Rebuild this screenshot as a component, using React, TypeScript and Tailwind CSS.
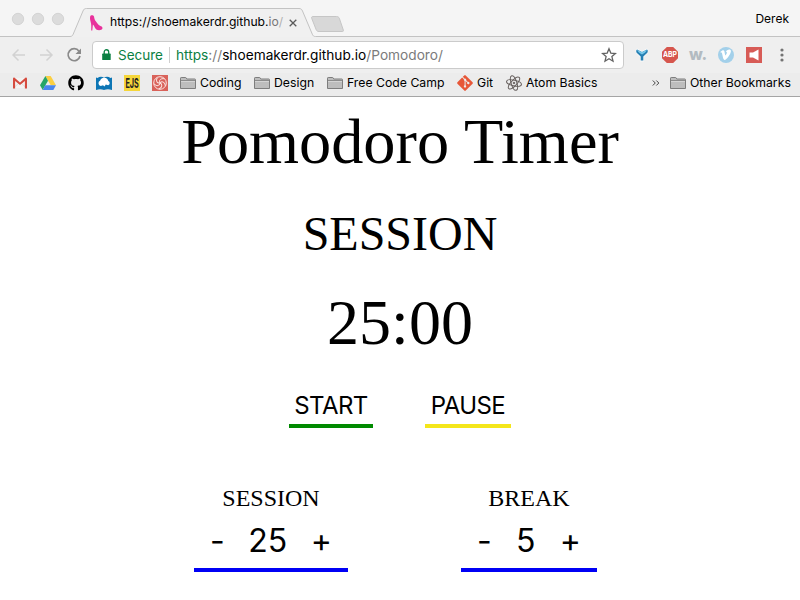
import React from "react";
import { FaGithub, FaGitAlt } from "react-icons/fa";

const ui = "font-['Inter','Liberation_Sans',sans-serif]";
const serif = "font-['Liberation_Serif',serif]";

function Folder() {
  return (
    <svg className="h-4 w-4 shrink-0" viewBox="0 0 16 16">
      <path d="M.5 13.5V3.2c0-.5.3-.7.7-.7h4.3c.5 0 .6.2.8.6l.4.9h8.1c.5 0 .7.3.7.7v8.8z" fill="#bdbdbd" stroke="#7d7d7d" />
      <path d="M1 5.5h14" stroke="#8c8c8c" />
      <path d="M1 6.5h14" stroke="#d4d4d4" />
    </svg>
  );
}

function Gmail() {
  return (
    <svg className="h-4 w-4" viewBox="0 0 16 16">
      <path d="M2 3h12v10H2z" fill="#f4f2f1" />
      <path d="M2 12.5 7 8M14 12.5 9 8" stroke="#d8d4d3" strokeWidth=".8" />
      <path d="M1 13.5V3.800C1 3 1.600 2.600 2.300 2.600L8 7.400l5.700-4.800c.7 0 1.300.4 1.300 1.200v9.700h-2.100V5.900L8 10 3.100 5.900v7.600z" fill="#d54b3f" />
    </svg>
  );
}

function Drive() {
  return (
    <svg className="h-4 w-4" viewBox="0 0 16 16">
      <path d="M5.4 1.1h5.3L16 10.2h-5.3z" fill="#fbcf42" />
      <path d="M5.4 1.1 8 5.7 2.7 14.9 0 10.2z" fill="#26a567" />
      <path d="M5.3 10.2H16l-2.700 4.700H2.700z" fill="#4986ee" />
    </svg>
  );
}

function CloudBook() {
  return (
    <svg className="h-4 w-4" viewBox="0 0 16 16">
      <path d="M0 2.500l1.500.5c2-1.600 4.700-1.600 6.500-.3 1.800-1.300 4.500-1.300 6.500.3l1.500-.5V15c-2.800-1-5.500-1-8 0-2.500-1-5.200-1-8 0z" fill="#0d76b5" />
      <path d="M4.800 11a2.900 2.900 0 0 1-.6-5.500A4.200 4.200 0 0 1 12.300 6a2.300 2.300 0 0 1-.2 4.300L9.800 9.600 8.500 11.500 7 10.300z" fill="#fff" />
    </svg>
  );
}

function Ejs() {
  return (
    <span className="flex h-4 w-4 items-center justify-center bg-[#f5d63a]">
      <span className={`${ui} scale-x-[.66] scale-y-[1.2] text-[11px] font-bold leading-4 text-[#222]`}>EJS</span>
    </span>
  );
}

function Swirl() {
  return (
    <svg className="h-4 w-4" viewBox="0 0 16 16">
      <path d="M0 0h16v16H0z" fill="#d9625a" />
      <g fill="none" stroke="#fbe5e2" strokeWidth="1">
        <circle cx="8" cy="8" r="6.3" />
        {[0, 72, 144, 216, 288].map((a) => (
          <path key={a} d="M8 8C6.500 5.500 8.500 3 12.500 3.800" transform={`rotate(${a} 8 8)`} />
        ))}
      </g>
    </svg>
  );
}

function Atom() {
  return (
    <svg className="h-4 w-4" viewBox="0 0 16 16" fill="none" stroke="#67605e" strokeWidth="1">
      <ellipse cx="8" cy="8" rx="7.6" ry="2.8" transform="rotate(13 8 8)" />
      <ellipse cx="8" cy="8" rx="7.6" ry="2.8" transform="rotate(73 8 8)" />
      <ellipse cx="8" cy="8" rx="7.6" ry="2.8" transform="rotate(133 8 8)" />
      <circle cx="8" cy="8" r=".8" fill="#67605e" />
    </svg>
  );
}

function TabStrip() {
  return (
    <div className="relative h-[37px] bg-[#f5f5f5]">
      <svg className="absolute inset-0" width="800" height="37" viewBox="0 0 800 37">
        <g fill="#dcdcdc" stroke="#cecece" strokeWidth=".8">
          <circle cx="18" cy="19" r="5.700" />
          <circle cx="38" cy="19" r="5.700" />
          <circle cx="58" cy="19" r="5.700" />
        </g>
        <path d="M0 36.500H70c2 0 2.500-.8 3.200-2.300L83 11c.8-1.800 1.500-2.500 3.500-2.500H299c2 0 2.700.8 3.500 2.500l9.800 23.200c.7 1.500 1.200 2.300 3.200 2.300H800V38H0z" fill="#f0f0f0" />
        <path d="M0 36.500H70c2 0 2.500-.8 3.200-2.300L83 11c.8-1.800 1.500-2.500 3.500-2.500H299c2 0 2.700.8 3.500 2.500l9.800 23.200c.7 1.500 1.200 2.300 3.200 2.300H800" fill="none" stroke="#c3c3c3" />
        <path d="M313 16.500h23.500c1.500 0 2.200.5 2.800 1.700l4 11.800c.4 1 0 1.500-1 1.500H319c-1.500 0-2.200-.5-2.800-1.700l-4.500-11.500c-.4-1.200.2-1.800 1.300-1.800z" fill="#d8d8d8" stroke="#c6c6c6" />
      </svg>
      <div className="relative flex h-[37px] items-start pl-[89px]">
        <svg className="mt-[15px] h-4 w-4" viewBox="0 0 16 16">
          <path d="M1.700.5C3-.1 4.600.3 5 1.500c.3 1.800.6 3.500 2.200 5.300 1.300 1.600 2 3.200 3.800 4 1.300.5 2.600 1 2.500 2.500-.1 1.800-3.800 2.400-5.800 1.400C6 13.700 5.600 11 3.900 9.400L3.300 15.500H2.200C2.200 12 2.600 9 1.500 6.200 1 4.500.6 1.500 1.700.5z" fill="#e8319b" />
        </svg>
        <div className={`${ui} mt-[14px] ml-[5px] h-4 w-[178px] whitespace-nowrap text-[12.150px] leading-4`}>
          https://shoemakerdr.github.<span className="text-[#777]">io</span><span className="text-[#b0b0b0]">/</span>
        </div>
        <svg className="mt-[19px] ml-[1px] h-2 w-2" viewBox="0 0 8 8"><path d="m.7.7 6.600 6.600m0-6.600L.7 7.300" stroke="#5a5a5a" strokeWidth="1.300" /></svg>
        <span className={`${ui} mt-[11px] mr-[11px] ml-auto text-[12px] leading-4 text-black`}>Derek</span>
      </div>
    </div>
  );
}

function Toolbar() {
  return (
    <div className="flex h-[36px] items-center bg-[#efefef] pl-[12px]">
      <svg className="h-4 w-[72px]" viewBox="0 0 72 16" fill="none">
        <path d="M13 8H1m5.500-5.500L1 8l5.500 5.500M28 8h12m-5.500-5.500L40 8l-5.500 5.500" stroke="#d2d2d2" strokeWidth="1.500" />
        <path d="M67 4.200A6 6 0 1 0 68 9" stroke="#8a8a8a" strokeWidth="1.700" />
        <path d="M69 1.500V7h-5.500z" fill="#8a8a8a" />
      </svg>
      <div className="ml-[8px] flex h-[28px] w-[532px] items-center rounded-[4px] border border-[#cbcbcb] bg-white pl-[9px]">
        <svg className="h-3 w-[9px]" viewBox="0 0 9 12"><path d="M2.200 5.500V3a2.200 2.200 0 0 1 4.500 0v2.500" fill="none" stroke="#0b8043" strokeWidth="1.300" /><rect x=".2" y="4.600" width="8.500" height="6.500" rx=".6" fill="#0b8043" /></svg>
        <span className={`${ui} mt-px ml-[7px] w-[51px] whitespace-nowrap text-[13.500px] text-[#0b8043]`}>Secure</span>
        <span className="h-[16px] w-px bg-[#cfcfcf]" />
        <span className={`${ui} mt-px ml-[6px] whitespace-nowrap text-[13.700px] text-[#7b7b7b]`}>
          <span className="text-[#0b8043]">https</span>://<span className="text-black">shoemakerdr.github.io</span>/Pomodoro/
        </span>
        <svg className="mr-[6px] ml-auto h-4 w-4" viewBox="0 0 16 16"><path d="m8 1.800 1.800 4.300 4.700.4-3.600 3.100 1.100 4.600L8 11.700l-4 2.500 1.100-4.600-3.600-3.100 4.700-.4z" fill="none" stroke="#626262" strokeWidth="1.300" /></svg>
      </div>
      <div className="ml-[10px] flex gap-[12px]">
        <svg className="h-4 w-4" viewBox="0 0 16 16">
          <path d="M3 1.500 8 4l5-2.500c2 1.200 1.800 3.500.3 5L10 10v4.500H6V10L2.700 6.500C1.200 5 1 2.700 3 1.500z" fill="#fafafa" />
          <path d="M3 2.500 8 5l5-2.500c1.200 1 1 2.700-.2 3.800L9.300 9.500v4H6.700v-4L3.200 6.300C2 5.200 1.800 3.500 3 2.500z" fill="#267fb3" />
          <path d="M3.200 2.700 8 5.200l4.800-2.500c-.5 2-2.600 3.600-4.800 4.800C5.800 6.300 3.700 4.700 3.200 2.700z" fill="#79c8ea" />
        </svg>
        <span className="flex h-4 w-4 items-center justify-center bg-[#d6564d] [clip-path:polygon(30%_0,70%_0,100%_30%,100%_70%,70%_100%,30%_100%,0_70%,0_30%)]"><span className={`${ui} scale-y-[1.150] text-[6.800px] leading-4 font-bold text-white`}>ABP</span></span>
        <span className={`${ui} -mt-px flex h-4 w-4 items-center justify-center text-[16px] font-extrabold text-[#b3bbc1]`}>w.</span>
        <svg className="h-4 w-4" viewBox="0 0 16 16"><circle cx="8" cy="8" r="8" fill="#a3d0ea" /><path d="M2.500 4.800C4.200 3.200 5.800 2.500 6.400 4.200L7.200 8.500c1.500-1.500 2-2.800 1.500-3.500-.4-.4-1 0-1 0 .8-2.700 5.500-3.700 5.200-.8-.2 3-4.500 8.800-6.200 8.800-1.800 0-2.200-5.500-2.800-7-.3-.6-.7-.4-1 0z" fill="#fff" /></svg>
        <svg className="h-4 w-4" viewBox="0 0 16 16"><path d="M0 0h16v16H0z" fill="#d75b56" /><path d="M3.500 5.500H7L12.500 2.500v11L7 10.500H3.500z" fill="#fff" /></svg>
        <svg className="h-4 w-4" viewBox="0 0 16 16" fill="#737373"><circle cx="8" cy="3" r="1.600" /><circle cx="8" cy="8" r="1.600" /><circle cx="8" cy="13" r="1.600" /></svg>
      </div>
    </div>
  );
}

function Label({ children, className }: { children: React.ReactNode; className: string }) {
  return <span className={`${ui} mt-px ml-[4px] whitespace-nowrap text-[12.250px] leading-4 text-black ${className}`}>{children}</span>;
}

function Bookmarks() {
  return (
    <div className="flex h-[24px] items-center border-b border-[#a5a5a5] bg-[#ececec] pb-[4px] pl-[12px]">
      <div className="flex items-center gap-[12px]">
        <Gmail />
        <Drive />
        <FaGithub className="h-4 w-4" />
        <CloudBook />
        <Ejs />
        <Swirl />
        <div className="flex items-center"><Folder /><Label className="w-[42px]">Coding</Label></div>
        <div className="flex items-center"><Folder /><Label className="w-[41px]">Design</Label></div>
        <div className="flex items-center"><Folder /><Label className="w-[98px]">Free Code Camp</Label></div>
        <div className="flex items-center"><FaGitAlt className="-mx-px h-[18px] w-[18px] text-[#e75738]" /><Label className="w-[17px]">Git</Label></div>
        <div className="flex items-center"><Atom /><Label className="w-[72px]">Atom Basics</Label></div>
      </div>
      <svg className="ml-[54px] h-2 w-2" viewBox="0 0 8 8" fill="none" stroke="#444"><path d="M.8 1.500 3.300 4 .8 6.500M4.300 1.500 6.800 4 4.300 6.500" /></svg>
      <div className="ml-[10px] flex items-center"><Folder /><Label className="w-[102px]">Other Bookmarks</Label></div>
    </div>
  );
}

function Stepper({ title, value, width }: { title: string; value: number; width: string }) {
  return (
    <div className={`flex flex-col items-center ${width}`}>
      <div className={`${serif} text-[24px] leading-[28px]`}>{title}</div>
      <div className={`${ui} mt-[6px] flex h-[54px] w-full items-start justify-between border-b-4 border-[#0000f5] px-[16px] text-[32px] leading-[46px]`}>
        <button>-</button>
        <span>{value}</span>
        <button>+</button>
      </div>
    </div>
  );
}

export default function App() {
  return (
    <div className="h-[600px] w-[800px] overflow-hidden bg-white text-black">
      <TabStrip />
      <Toolbar />
      <Bookmarks />
      <main className="flex flex-col items-center">
        <h1 className={`${serif} mt-[8px] text-[64.300px] leading-[74px]`}>Pomodoro Timer</h1>
        <h2 className={`${serif} mt-[28px] text-[48px] leading-[54px]`}>SESSION</h2>
        <div className={`${serif} mt-[25px] text-[64px] leading-[74px]`}>25:00</div>
        <div className={`${ui} mt-[28px] flex w-full gap-[52px] pl-[289px] text-[24px] leading-[30px] tracking-[-0.600px]`}>
          <button className="h-[40px] w-[84px] border-b-4 border-[#008a00] pb-[1px]">START</button>
          <button className="h-[40px] w-[86px] border-b-4 border-[#f4e61a] pb-[1px]">PAUSE</button>
        </div>
        <div className="mt-[56px] flex w-full gap-[113px] pl-[194px]">
          <Stepper title="SESSION" value={25} width="w-[154px]" />
          <Stepper title="BREAK" value={5} width="w-[136px]" />
        </div>
      </main>
    </div>
  );
}
